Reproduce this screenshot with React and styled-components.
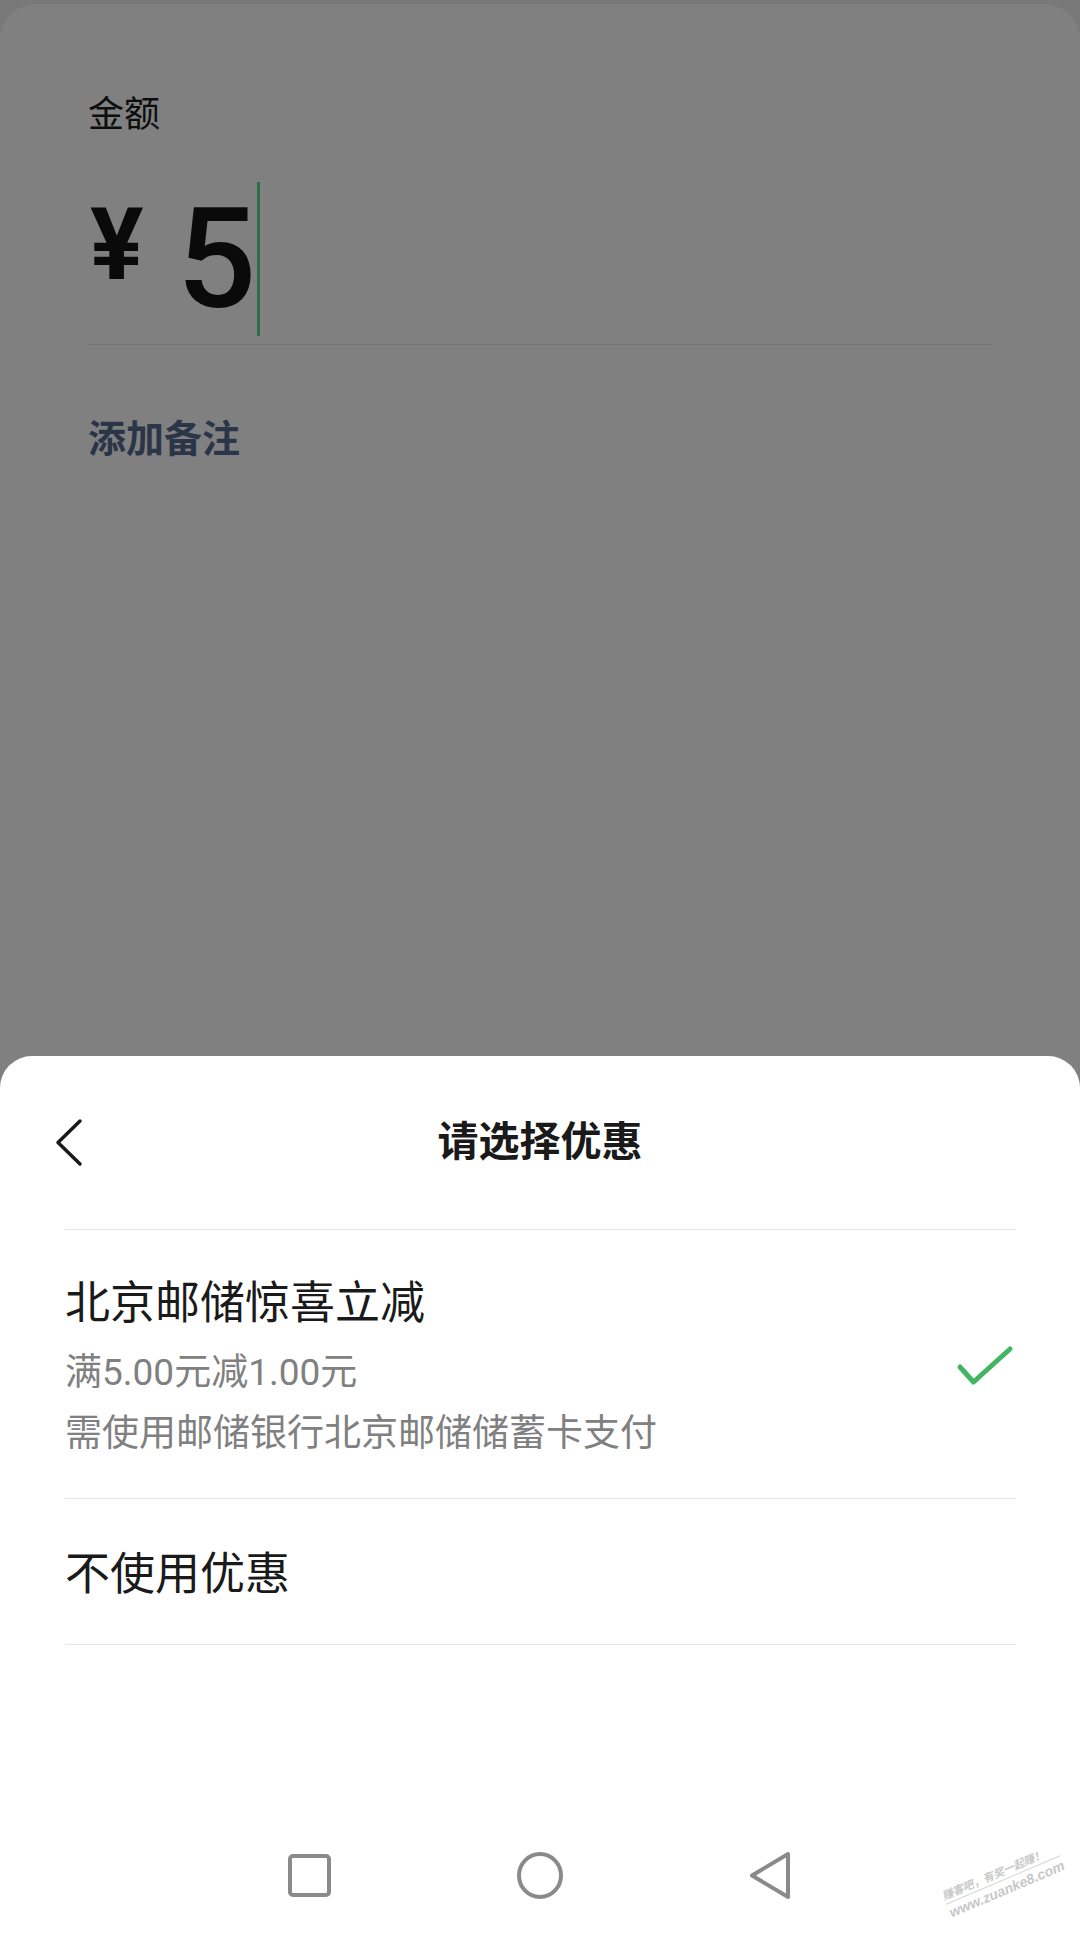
import React from "react";
import styled, { createGlobalStyle } from "styled-components";

const GlobalStyle = createGlobalStyle`
  html, body { margin: 0; padding: 0; }
  body {
    width: 1080px;
    height: 1934px;
    overflow: hidden;
    background: #797979;
    font-family: Roboto, "Noto Sans CJK SC", sans-serif;
  }
  * { box-sizing: border-box; }
`;

const Page = styled.div`
  position: relative;
  width: 1080px;
  height: 1934px;
  display: flex;
  flex-direction: column;
  background: #797979;
  overflow: hidden;
`;

const Backdrop = styled.div`
  margin-top: 4px;
  flex: 1;
  display: flex;
  flex-direction: column;
  background: #808080;
  border-radius: 36px 36px 0 0;
`;

const Form = styled.div`
  padding: 93px 88px 0;
`;

const Label = styled.div`
  font-size: 36px;
  line-height: 36px;
  color: #0d0d0d;
`;

const AmountRow = styled.div`
  display: flex;
  align-items: flex-start;
  margin-top: 49px;
  color: #0a0a0a;
`;

const Currency = styled.span`
  font-family: Roboto, sans-serif;
  font-weight: 700;
  font-size: 100px;
  line-height: 1;
  margin-top: 13px;
  margin-right: 33px;
  margin-left: 2px;
`;

const Digits = styled.span`
  font-family: Roboto, sans-serif;
  font-weight: 500;
  font-size: 140px;
  line-height: 1;
  margin-top: 7px;
`;

const Caret = styled.span`
  width: 3px;
  height: 154px;
  margin-left: 1px;
  background: #2e6e46;
`;

const Rule = styled.div`
  height: 1px;
  background: #747474;
  margin-top: 8px;
`;

const Remark = styled.div`
  margin-top: 75px;
  font-size: 38px;
  line-height: 38px;
  font-weight: 600;
  color: #2b3548;
`;

const Sheet = styled.div`
  margin-top: auto;
  height: 878px;
  background: #ffffff;
  border-radius: 32px 32px 0 0;
  display: flex;
  flex-direction: column;
`;

const Header = styled.div`
  height: 173px;
  display: grid;
  grid-template-columns: 1fr auto 1fr;
  align-items: center;
  padding: 0 53px;
`;

const BackButton = styled.button`
  justify-self: start;
  display: flex;
  padding: 0;
  border: none;
  background: none;
`;

const Title = styled.div`
  font-size: 41px;
  line-height: 41px;
  font-weight: 600;
  color: #1a1a1a;
`;

const List = styled.div`
  margin: 0 64px 0 65px;
  border-bottom: 1px solid #e6e6e6;
`;

const Option = styled.div`
  display: flex;
  align-items: center;
  justify-content: space-between;
  border-top: 1px solid #e6e6e6;
  padding: ${(p) => p.$top}px 0 ${(p) => p.$bottom}px;
`;

const OptionBody = styled.div`
  display: flex;
  flex-direction: column;
`;

const OptionName = styled.div`
  font-size: 45px;
  line-height: 60px;
  color: #1a1a1a;
`;

const Details = styled.div`
  margin-top: 8px;
`;

const Detail = styled.div`
  font-size: 37px;
  line-height: 61px;
  color: #808080;
`;

const Check = styled.svg`
  margin-top: -6px;
`;

const Nav = styled.div`
  margin-top: auto;
  height: 118px;
  display: flex;
  justify-content: center;
  align-items: center;
  gap: 180px;
`;

const NavIcon = styled.svg`
  width: 50px;
  height: 50px;
  fill: none;
  stroke: #8a8a8a;
  stroke-width: 4;
  stroke-linejoin: round;
`;

const Watermark = styled.div`
  position: absolute;
  left: 940px;
  top: 1890px;
  transform: rotate(-23deg);
  transform-origin: left top;
  color: #c8c8c8;
  font-family: "Liberation Sans", "Noto Sans CJK SC", sans-serif;
  font-weight: 700;
  font-style: italic;
  font-size: 11px;
  line-height: 15px;
  white-space: nowrap;
`;

const WatermarkLine = styled.div`
  border-top: 1px solid #d4d4d4;
  padding-top: 1px;
  font-size: 14px;
  line-height: 17px;
`;

export default function App() {
  return (
    <>
      <GlobalStyle />
      <Page>
        <Backdrop>
          <Form>
            <Label>金额</Label>
            <AmountRow>
              <Currency>¥</Currency>
              <Digits>5</Digits>
              <Caret />
            </AmountRow>
            <Rule />
            <Remark>添加备注</Remark>
          </Form>
          <Sheet>
            <Header>
              <BackButton aria-label="返回">
                <svg width="32" height="50" viewBox="0 0 32 50">
                  <path
                    d="M27 3 L5 24.5 L27 46"
                    fill="none"
                    stroke="#1a1a1a"
                    strokeWidth="3.5"
                    strokeLinecap="round"
                    strokeLinejoin="round"
                  />
                </svg>
              </BackButton>
              <Title>请选择优惠</Title>
              <span />
            </Header>
            <List>
              <Option $top={44} $bottom={34}>
                <OptionBody>
                  <OptionName>北京邮储惊喜立减</OptionName>
                  <Details>
                    <Detail>满5.00元减1.00元</Detail>
                    <Detail>需使用邮储银行北京邮储储蓄卡支付</Detail>
                  </Details>
                </OptionBody>
                <Check width="60" height="44" viewBox="0 0 60 44">
                  <path
                    d="M4 23 L17.5 38 L54 5"
                    fill="none"
                    stroke="#43b562"
                    strokeWidth="5"
                    strokeLinecap="round"
                    strokeLinejoin="round"
                  />
                </Check>
              </Option>
              <Option $top={46} $bottom={39}>
                <OptionName>不使用优惠</OptionName>
              </Option>
            </List>
            <Nav>
              <NavIcon viewBox="0 0 50 50">
                <rect x="5" y="6" width="39" height="39" rx="3" />
              </NavIcon>
              <NavIcon viewBox="0 0 50 50">
                <ellipse cx="25" cy="25.5" rx="21" ry="21.5" />
              </NavIcon>
              <NavIcon viewBox="0 0 50 50">
                <path d="M43 4 L7 25.5 L43 47 Z" />
              </NavIcon>
            </Nav>
          </Sheet>
        </Backdrop>
        <Watermark>
          <div>赚客吧，有奖一起赚！</div>
          <WatermarkLine>www.zuanke8.com</WatermarkLine>
        </Watermark>
      </Page>
    </>
  );
}
